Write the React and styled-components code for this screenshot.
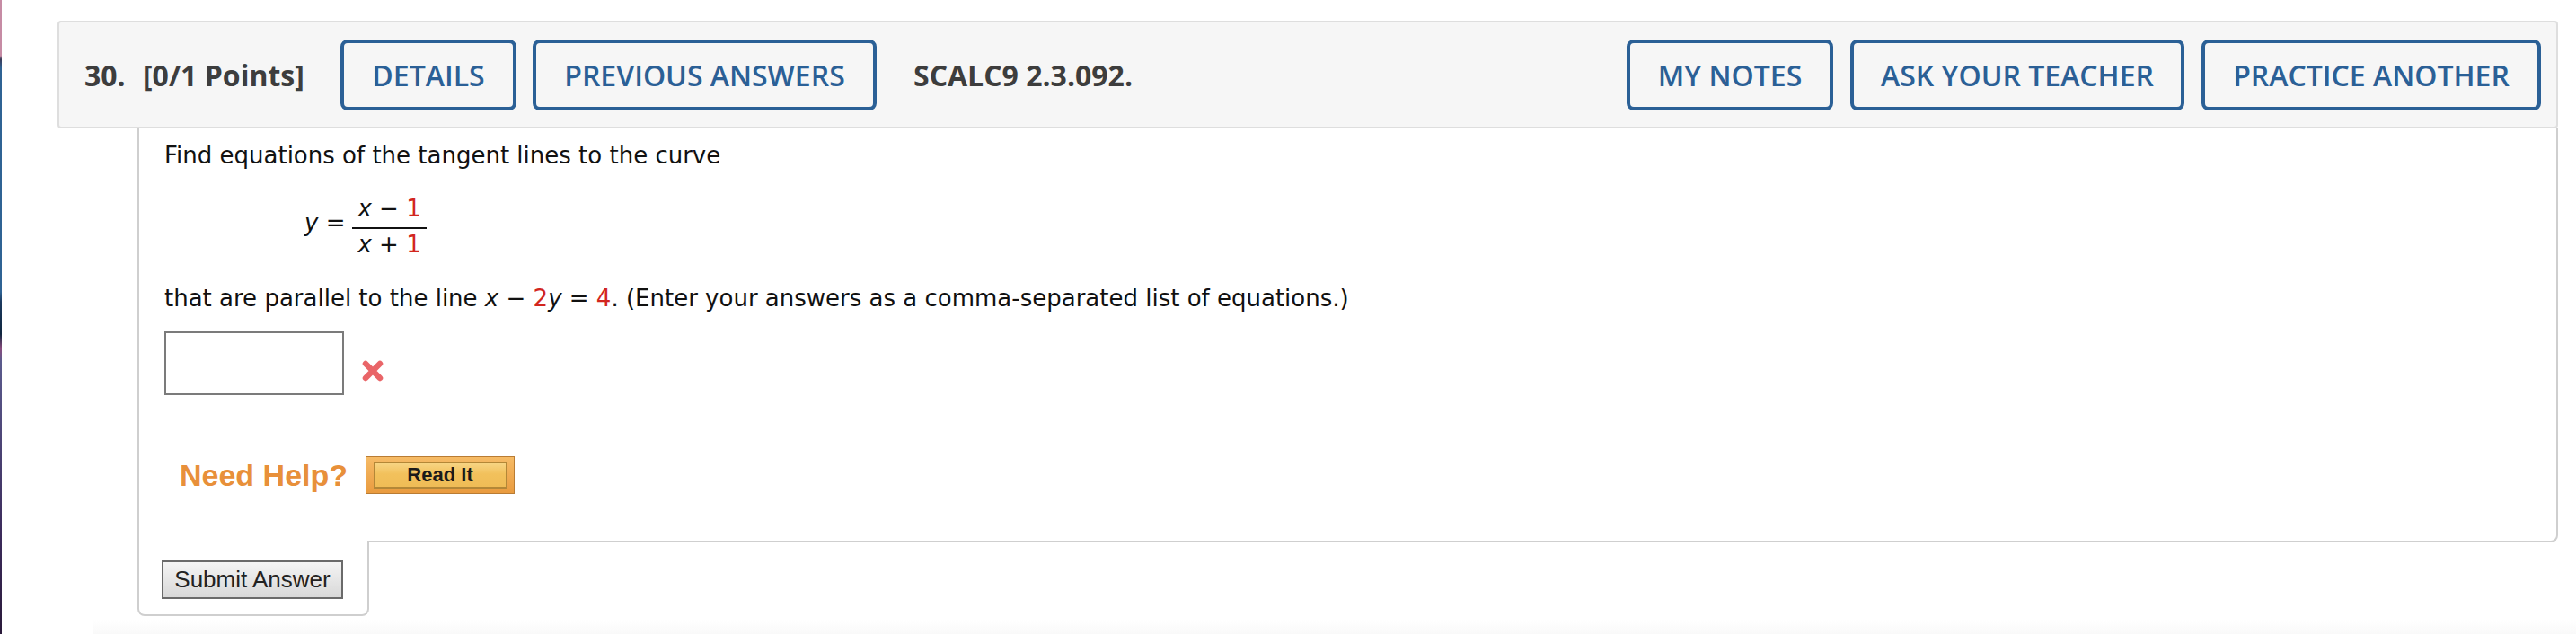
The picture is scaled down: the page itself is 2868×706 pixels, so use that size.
import styled, { createGlobalStyle } from 'styled-components';

const GlobalStyle = createGlobalStyle`
  html, body {
    margin: 0;
    padding: 0;
    background: #fff;
  }
  body {
    width: 2868px;
    height: 706px;
    overflow: hidden;
  }
`;

const Page = styled.div`
  display: flex;
  width: 2868px;
  height: 706px;
`;

const EdgeStrip = styled.div`
  flex: none;
  width: 2px;
  background: linear-gradient(
    to bottom,
    #c68ba4 0,
    #c68ba4 62px,
    #3b3b58 66px,
    #2f6394 76px,
    #2f6394 325px,
    #1c3a5f 336px,
    #10263f 372px,
    #8a4c7e 388px,
    #5b5b8d 402px,
    #3b2a5a 600px,
    #2a1a3a 706px
  );
`;

const Main = styled.div`
  flex: 1;
  display: flex;
  flex-direction: column;
  padding: 23px 20px 0 62px;
`;

const Header = styled.div`
  display: flex;
  align-items: center;
  box-sizing: border-box;
  height: 120px;
  padding: 0 17px 0 28px;
  background: #f6f6f6;
  border: 2px solid #dedede;
  border-radius: 4px;
`;

const Title = styled.span`
  flex: none;
  width: ${(p) => (p.$width ? `${p.$width}px` : 'auto')};
  margin-left: ${(p) => p.$offset || 0}px;
  font-family: 'Open Sans', 'Liberation Sans', sans-serif;
  font-weight: 700;
  font-size: 32px;
  color: #3d3d3d;
  white-space: nowrap;
`;

const HeaderButton = styled.button`
  flex: none;
  display: flex;
  align-items: center;
  justify-content: center;
  box-sizing: border-box;
  width: ${(p) => p.$width}px;
  height: 79px;
  margin-left: ${(p) => p.$offset || 0}px;
  padding: 0;
  background: transparent;
  border: 4px solid #2b6096;
  border-radius: 8px;
  color: #2b6096;
  font-family: 'Open Sans', 'Liberation Sans', sans-serif;
  font-weight: 600;
  font-size: 32px;
  white-space: nowrap;
  cursor: pointer;
`;

const Spacer = styled.div`
  flex: 1;
`;

const Panel = styled.div`
  margin-left: 89px;
  padding: 14px 28px 52px;
  border: 2px solid #cfcfcf;
  border-top: none;
  border-bottom-right-radius: 8px;
  font-family: 'DejaVu Sans', Verdana, sans-serif;
  font-size: 26px;
  line-height: 32px;
  color: #111;
`;

const TextLine = styled.p`
  margin: ${(p) => p.$top || 0}px 0 0;
  white-space: nowrap;
`;

const Var = styled.i`
  font-style: italic;
`;

const Num = styled.span`
  color: #d2261e;
`;

const MathRow = styled.div`
  display: flex;
  align-items: flex-start;
  margin: 27px 0 0 156px;
`;

const Lhs = styled.span`
  margin: 16px 8px 0 0;
  white-space: pre;
`;

const Fraction = styled.span`
  display: inline-flex;
  flex-direction: column;
  align-items: stretch;
`;

const FracPart = styled.span`
  padding: 0 6px;
  text-align: center;
  white-space: pre;
`;

const FracBar = styled.span`
  height: 2px;
  margin: 5px 0 1px;
  background: #111;
`;

const AnswerRow = styled.div`
  display: flex;
  align-items: flex-start;
  margin-top: 21px;
`;

const AnswerBox = styled.div`
  box-sizing: border-box;
  width: 200px;
  height: 71px;
  border: 2px solid #7b7b7b;
  background: #fff;
`;

const WrongMark = styled.svg`
  flex: none;
  margin: 31px 0 0 19px;
`;

const HelpRow = styled.div`
  display: flex;
  align-items: center;
  height: 42px;
  margin: 68px 0 0 17px;
`;

const HelpLabel = styled.span`
  margin-right: 20px;
  font-family: 'Liberation Sans', Arial, sans-serif;
  font-weight: 700;
  font-size: 34px;
  line-height: 42px;
  color: #e8903a;
  white-space: nowrap;
`;

const ReadIt = styled.button`
  display: flex;
  align-items: center;
  justify-content: center;
  box-sizing: border-box;
  width: 166px;
  height: 42px;
  padding: 0;
  border: 1px solid #b97c34;
  background: linear-gradient(to bottom, #f6bb66, #e99b3f);
  cursor: pointer;
`;

const ReadItFace = styled.span`
  display: flex;
  align-items: center;
  justify-content: center;
  box-sizing: border-box;
  width: 149px;
  height: 30px;
  border: 2px solid #b38737;
  background: linear-gradient(to bottom, #f7d483 0, #f2c15c 45%, #efbc56 100%);
  font-family: 'Liberation Sans', Arial, sans-serif;
  font-weight: 700;
  font-size: 22px;
  color: #1a1a1a;
`;

const SubmitTab = styled.div`
  box-sizing: border-box;
  width: 258px;
  margin: -2px 0 0 89px;
  padding: 22px 0 17px 25px;
  background: #fff;
  border: 2px solid #cfcfcf;
  border-top: none;
  border-radius: 0 0 8px 8px;
`;

const SubmitButton = styled.button`
  display: block;
  box-sizing: border-box;
  width: 202px;
  height: 43px;
  padding: 0;
  border: 2px solid #6a6a6a;
  background: linear-gradient(to bottom, #f4f4f4, #d8d8d8);
  font-family: 'Liberation Sans', Arial, sans-serif;
  font-size: 26px;
  color: #222;
  cursor: pointer;
`;

const FooterShade = styled.div`
  flex: 1;
  margin: 4px -20px 0 40px;
  background: linear-gradient(to bottom, #fff, #f9f9f9);
`;

const leftButtons = [
  { label: 'DETAILS', width: 196, offset: 0 },
  { label: 'PREVIOUS ANSWERS', width: 383, offset: 18 },
];

const rightButtons = [
  { label: 'MY NOTES', width: 230, offset: 0 },
  { label: 'ASK YOUR TEACHER', width: 372, offset: 19 },
  { label: 'PRACTICE ANOTHER', width: 378, offset: 19 },
];

const App = () => (
  <>
    <GlobalStyle />
    <Page>
      <EdgeStrip />
      <Main>
        <Header>
          <Title $width={65}>30.</Title>
          <Title $width={220}>[0/1 Points]</Title>
          {leftButtons.map((b) => (
            <HeaderButton key={b.label} $width={b.width} $offset={b.offset}>
              {b.label}
            </HeaderButton>
          ))}
          <Title $offset={41}>SCALC9 2.3.092.</Title>
          <Spacer />
          {rightButtons.map((b) => (
            <HeaderButton key={b.label} $width={b.width} $offset={b.offset}>
              {b.label}
            </HeaderButton>
          ))}
        </Header>

        <Panel>
          <TextLine>Find equations of the tangent lines to the curve</TextLine>
          <MathRow>
            <Lhs>
              <Var>y</Var> =
            </Lhs>
            <Fraction>
              <FracPart>
                <Var>x</Var> − <Num>1</Num>
              </FracPart>
              <FracBar />
              <FracPart>
                <Var>x</Var> + <Num>1</Num>
              </FracPart>
            </Fraction>
          </MathRow>
          <TextLine $top={28}>
            that are parallel to the line <Var>x</Var> − <Num>2</Num>
            <Var>y</Var> = <Num>4</Num>. (Enter your answers as a comma-separated
            list of equations.)
          </TextLine>
          <AnswerRow>
            <AnswerBox />
            <WrongMark width="26" height="26" viewBox="0 0 26 26" aria-hidden="true">
              <path
                d="M5 5 L21 21 M21 5 L5 21"
                stroke="#e8585c"
                strokeWidth="6.5"
                strokeLinecap="round"
                opacity="0.92"
              />
            </WrongMark>
          </AnswerRow>
          <HelpRow>
            <HelpLabel>Need Help?</HelpLabel>
            <ReadIt>
              <ReadItFace>Read It</ReadItFace>
            </ReadIt>
          </HelpRow>
        </Panel>

        <SubmitTab>
          <SubmitButton>Submit Answer</SubmitButton>
        </SubmitTab>
        <FooterShade />
      </Main>
    </Page>
  </>
);

export default App;
